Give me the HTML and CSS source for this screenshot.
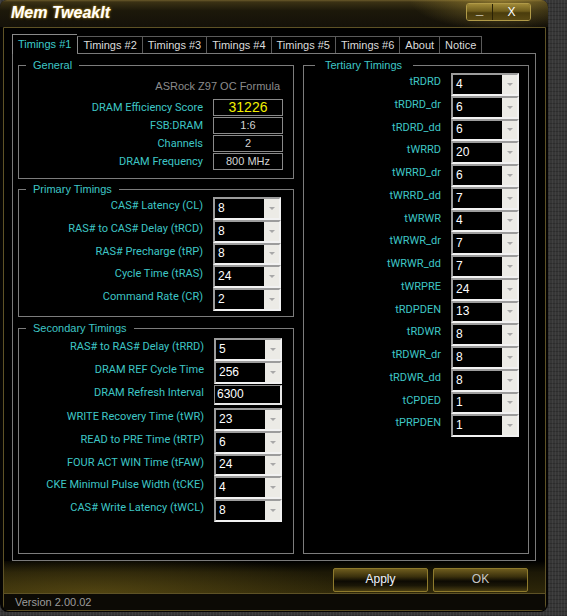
FILE: index.html
```html
<!DOCTYPE html>
<html>
<head>
<meta charset="utf-8">
<title>Mem TweakIt</title>
<link rel="stylesheet" href="styles.css">
</head>
<body>
<div class="window">
  <div class="titlebar">
    <span class="title">Mem TweakIt</span>
    <div class="caption-btns">
      <div class="cbtn min">_</div>
      <div class="cbtn close">X</div>
    </div>
  </div>
  <div class="frame">
    <div class="tabs">
      <div class="tab active">Timings #1</div>
      <div class="tab">Timings #2</div>
      <div class="tab">Timings #3</div>
      <div class="tab">Timings #4</div>
      <div class="tab">Timings #5</div>
      <div class="tab">Timings #6</div>
      <div class="tab">About</div>
      <div class="tab last">Notice</div>
    </div>
    <div class="panel">
      <div class="col-left">
        <fieldset class="group general">
          <legend>General</legend>
          <div class="board">ASRock Z97 OC Formula</div>
          <div class="info-rows">
            <span class="lbl">DRAM Efficiency Score</span><span class="box score">31226</span>
            <span class="lbl">FSB:DRAM</span><span class="box">1:6</span>
            <span class="lbl">Channels</span><span class="box">2</span>
            <span class="lbl">DRAM Frequency</span><span class="box">800 MHz</span>
          </div>
        </fieldset>
        <fieldset class="group primary">
          <legend>Primary Timings</legend>
          <div class="rows">
            <span class="lbl">CAS# Latency (CL)</span><div class="combo"><span class="val">8</span><span class="drop"></span></div>
            <span class="lbl">RAS# to CAS# Delay (tRCD)</span><div class="combo"><span class="val">8</span><span class="drop"></span></div>
            <span class="lbl">RAS# Precharge (tRP)</span><div class="combo"><span class="val">8</span><span class="drop"></span></div>
            <span class="lbl">Cycle Time (tRAS)</span><div class="combo"><span class="val">24</span><span class="drop"></span></div>
            <span class="lbl">Command Rate (CR)</span><div class="combo"><span class="val">2</span><span class="drop"></span></div>
          </div>
        </fieldset>
        <fieldset class="group secondary">
          <legend>Secondary Timings</legend>
          <div class="rows">
            <span class="lbl">RAS# to RAS# Delay (tRRD)</span><div class="combo"><span class="val">5</span><span class="drop"></span></div>
            <span class="lbl">DRAM REF Cycle Time</span><div class="combo"><span class="val">256</span><span class="drop"></span></div>
            <span class="lbl">DRAM Refresh Interval</span><div class="textbox">6300</div>
            <span class="lbl">WRITE Recovery Time (tWR)</span><div class="combo"><span class="val">23</span><span class="drop"></span></div>
            <span class="lbl">READ to PRE Time (tRTP)</span><div class="combo"><span class="val">6</span><span class="drop"></span></div>
            <span class="lbl">FOUR ACT WIN Time (tFAW)</span><div class="combo"><span class="val">24</span><span class="drop"></span></div>
            <span class="lbl">CKE Minimul Pulse Width (tCKE)</span><div class="combo"><span class="val">4</span><span class="drop"></span></div>
            <span class="lbl">CAS# Write Latency (tWCL)</span><div class="combo"><span class="val">8</span><span class="drop"></span></div>
          </div>
        </fieldset>
      </div>
      <fieldset class="group tertiary">
        <legend>Tertiary Timings</legend>
        <div class="rows">
          <span class="lbl">tRDRD</span><div class="combo"><span class="val">4</span><span class="drop"></span></div>
          <span class="lbl">tRDRD_dr</span><div class="combo"><span class="val">6</span><span class="drop"></span></div>
          <span class="lbl">tRDRD_dd</span><div class="combo"><span class="val">6</span><span class="drop"></span></div>
          <span class="lbl">tWRRD</span><div class="combo"><span class="val">20</span><span class="drop"></span></div>
          <span class="lbl">tWRRD_dr</span><div class="combo"><span class="val">6</span><span class="drop"></span></div>
          <span class="lbl">tWRRD_dd</span><div class="combo"><span class="val">7</span><span class="drop"></span></div>
          <span class="lbl">tWRWR</span><div class="combo"><span class="val">4</span><span class="drop"></span></div>
          <span class="lbl">tWRWR_dr</span><div class="combo"><span class="val">7</span><span class="drop"></span></div>
          <span class="lbl">tWRWR_dd</span><div class="combo"><span class="val">7</span><span class="drop"></span></div>
          <span class="lbl">tWRPRE</span><div class="combo"><span class="val">24</span><span class="drop"></span></div>
          <span class="lbl">tRDPDEN</span><div class="combo"><span class="val">13</span><span class="drop"></span></div>
          <span class="lbl">tRDWR</span><div class="combo"><span class="val">8</span><span class="drop"></span></div>
          <span class="lbl">tRDWR_dr</span><div class="combo"><span class="val">8</span><span class="drop"></span></div>
          <span class="lbl">tRDWR_dd</span><div class="combo"><span class="val">8</span><span class="drop"></span></div>
          <span class="lbl">tCPDED</span><div class="combo"><span class="val">1</span><span class="drop"></span></div>
          <span class="lbl">tPRPDEN</span><div class="combo"><span class="val">1</span><span class="drop"></span></div>
        </div>
      </fieldset>
    </div>
    <div class="actions">
      <div class="btn apply">Apply</div>
      <div class="btn ok">OK</div>
    </div>
    <div class="status">Version 2.00.02</div>
  </div>
</div>
</body>
</html>
```
FILE: styles.css
```css
html, body {
  margin: 0;
  padding: 0;
}
body {
  width: 567px;
  height: 616px;
  overflow: hidden;
  background-color: #363636;
  background-image:
    repeating-linear-gradient(90deg, rgba(255,255,255,0.05) 0 1px, transparent 1px 3px),
    repeating-linear-gradient(0deg, rgba(0,0,0,0.18) 0 1px, transparent 1px 4px);
  font-family: "Liberation Sans", Arial, sans-serif;
  font-size: 11px;
}
.window {
  width: 548px;
  height: 612px;
  background: #050403;
  border-radius: 7px 7px 8px 8px;
  display: flex;
  flex-direction: column;
  overflow: hidden;
}
.titlebar {
  height: 27px;
  flex: none;
  display: flex;
  align-items: flex-start;
  background:
    radial-gradient(ellipse 90px 30px at 500px 0, rgba(190,160,60,0.55), transparent),
    linear-gradient(180deg, #6a5a2a 0, #3a3114 2px, #1c180a 40%, #141109 100%);
}
.title {
  margin: 4px 0 0 11px;
  color: #fff;
  font-weight: bold;
  font-style: italic;
  font-size: 16px;
  line-height: 18px;
  text-shadow: 0 0 3px #b08a20, 0 0 1px #d0a830;
}
.caption-btns {
  margin: 3px 17px 0 auto;
  display: flex;
  height: 18px;
  border: 1px solid #b09a48;
  border-radius: 3px;
  box-sizing: border-box;
  overflow: hidden;
}
.cbtn {
  color: #fff;
  font-size: 13px;
  line-height: 16px;
  text-align: center;
  background: linear-gradient(180deg, #a08a38 0, #6e5c1c 45%, #4a3c0c 55%, #5a4a14 100%);
}
.cbtn.min {
  width: 25px;
  font-weight: bold;
  line-height: 12px;
  border-right: 1px solid #2a2206;
}
.cbtn.close {
  width: 37px;
  font-size: 12px;
}
.frame {
  flex: 1;
  margin: 0 2px 1px 3px;
  border: 1px solid #5e5226;
  border-radius: 0 0 6px 6px;
  display: flex;
  flex-direction: column;
  padding: 6px 0 0 0;
  background: #000;
}
.tabs {
  height: 19px;
  display: flex;
  align-items: flex-end;
  margin-left: 8px;
  position: relative;
  z-index: 1;
}
.tab {
  height: 17px;
  box-sizing: border-box;
  padding: 0 5px;
  border: 1px solid #5a5a5a;
  border-bottom: none;
  border-right: none;
  color: #dcdcdc;
  line-height: 16px;
  background: #000;
}
.tab.last {
  border-right: 1px solid #5a5a5a;
}
.tab.active {
  height: 20px;
  margin-bottom: -1px;
  padding: 0 6px 0 5px;
  color: #3ccaca;
  border-color: #8a8a8a;
  line-height: 19px;
}
.tab.active + .tab {
  border-left-color: #8a8a8a;
}
.panel {
  margin: 0 9px 0 8px;
  height: 508px;
  box-sizing: border-box;
  border: 1px solid #7a7a7a;
  background: #000;
  padding: 5px 6px 6px 5px;
  display: grid;
  grid-template-columns: 276px 226px;
  column-gap: 9px;
}
.col-left {
  display: flex;
  flex-direction: column;
}
.group {
  margin: 0;
  padding: 0;
  border: 1px solid #7c7c7c;
  min-width: 0;
  box-sizing: border-box;
}
.group legend {
  color: #3ec6c6;
  line-height: 13px;
  padding: 0 7px;
  margin-left: 7px;
}
.general { height: 120px; }
.primary { height: 134px; margin-top: 4px; }
.secondary { height: 232px; margin-top: 5px; }
.tertiary { height: 495px; }
.tertiary legend {
  padding: 0 11px 0 10px;
  margin-left: 11px;
}
.board {
  color: #8c8c8c;
  text-align: right;
  line-height: 13px;
  margin-top: 8px;
  padding-right: 13px;
}
.info-rows {
  margin-top: 6px;
  padding-right: 10px;
  display: grid;
  grid-template-columns: 1fr 70px;
  column-gap: 10px;
  grid-auto-rows: 17px;
  row-gap: 1px;
}
.lbl {
  font-family: Roboto, "Liberation Sans", sans-serif;
  color: #3ec6c6;
  text-align: right;
  line-height: 13px;
  white-space: nowrap;
}
.info-rows .lbl {
  line-height: 17px;
}
.box {
  border: 1px solid #8a8a8a;
  box-sizing: border-box;
  color: #d4d4d4;
  text-align: center;
  line-height: 15px;
}
.box.score {
  color: #f2f000;
  font-size: 14px;
}
.rows {
  display: grid;
  grid-template-columns: 1fr 68px;
  column-gap: 10px;
  grid-auto-rows: 22.75px;
}
.rows .lbl {
  padding-top: 2px;
}
.primary .rows {
  margin-top: 1px;
  padding-right: 12px;
}
.secondary .rows {
  margin-top: 3px;
  padding-right: 11px;
  grid-template-rows: 22.75px 22.75px 24.5px repeat(5, 22.75px);
}
.tertiary .rows {
  margin-top: 1px;
  padding-right: 9px;
}
.combo {
  box-sizing: border-box;
  height: 100%;
  border: 2px solid;
  border-color: #9c9c9c #f2f2f2 #f2f2f2 #9c9c9c;
  display: flex;
  background: #000;
}
.val {
  flex: 1;
  color: #fff;
  font-size: 12px;
  padding-left: 3px;
  display: flex;
  align-items: center;
  padding-bottom: 1px;
}
.drop {
  width: 15px;
  background: #ecebe6;
  display: flex;
  align-items: center;
  justify-content: center;
}
.drop::after {
  content: "";
  border-left: 3px solid transparent;
  border-right: 3px solid transparent;
  border-top: 3px solid #a8a8a8;
}
.textbox {
  box-sizing: border-box;
  height: 20px;
  margin-top: 1.5px;
  border: 1px solid;
  border-width: 1px 2px 2px 1px;
  border-color: #8c8c8c #e8e8e8 #e8e8e8 #8c8c8c;
  color: #fff;
  font-size: 12px;
  line-height: 17px;
  padding-left: 2px;
}
.actions {
  height: 32px;
  box-sizing: border-box;
  padding: 7px 17px 0 0;
  display: flex;
  justify-content: flex-end;
  gap: 5px;
  background:
    radial-gradient(ellipse 260px 40px at 90px 32px, rgba(110,92,24,0.55), transparent),
    linear-gradient(180deg, #000 0, #1c1806 35%, #2e2709 100%);
}
.btn {
  width: 95px;
  height: 24px;
  box-sizing: border-box;
  border: 1px solid #8e7a2c;
  border-radius: 2px;
  background: linear-gradient(180deg, #6e5c1e 0, #3a300c 35%, #0c0a03 55%, #1a1606 75%, #4a3e12 100%);
  text-align: center;
  line-height: 21px;
  font-size: 12px;
}
.btn.apply {
  color: #f0f4ff;
}
.btn.ok {
  color: #c4c4c4;
}
.status {
  border-top: 1px solid #5e5226;
  flex: 1;
  color: #9c9c9c;
  padding-left: 11px;
  line-height: 16px;
  background: #0c0a05;
}
```
